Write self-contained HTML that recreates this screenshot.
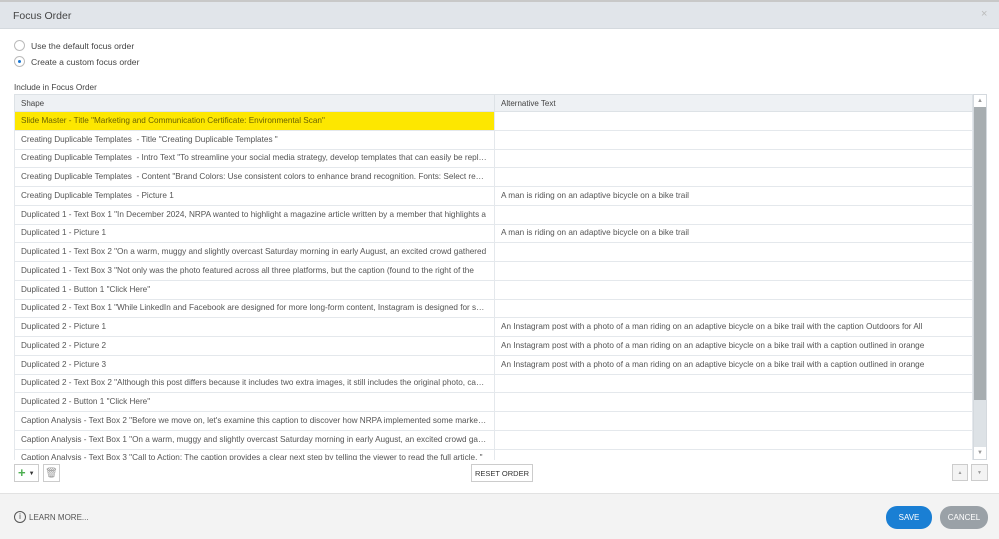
<!DOCTYPE html>
<html><head><style>
*{margin:0;padding:0;box-sizing:border-box}
body{width:999px;height:539px;background:#fff;font-family:"Liberation Sans",sans-serif;position:relative;overflow:hidden;color:#444}
.abs{position:absolute}
.title{left:0;top:0;width:999px;height:29px;background:#e1e5ea;border-bottom:1px solid #d4d9de;font-size:10.5px;color:#444;padding:8px 0 0 13px;border-top:2px solid #c8c8c8}
.radio{width:11px;height:11px;border:1px solid #bbb;border-radius:50%;background:#fff}
.lbl{font-size:8.6px;color:#444}
.wrap{position:absolute;left:14px;top:94px;width:959px;height:366px;overflow:hidden}
table{border-collapse:collapse;table-layout:fixed;width:959px;font-size:8.2px;color:#555}
td{height:18.75px;border:1px solid #e4e8ec;padding:0 6px;white-space:nowrap;overflow:hidden;text-overflow:ellipsis;line-height:12px}
th{height:17px;background:#eef1f4;border:1px solid #dde2e6;font-weight:normal;text-align:left;padding:0 6px;font-size:8px;color:#444}
.footer{left:0;top:493px;width:999px;height:46px;background:#f3f3f3;border-top:1px solid #e2e2e2}
.btn{border:1px solid #ccc;background:#fff;font-size:7.5px;color:#333;text-align:center}
</style></head><body>
<div class="abs title">Focus Order</div>
<div class="abs" style="left:981px;top:8px;font-size:11px;color:#bbb">×</div>
<div class="abs radio" style="left:14px;top:40px"></div>
<div class="abs lbl" style="left:31px;top:41px">Use the default focus order</div>
<div class="abs radio" style="left:14px;top:56px"><div style="width:3px;height:3px;background:#1976d2;border-radius:50%;margin:3px 0 0 3px"></div></div>
<div class="abs lbl" style="left:31px;top:57px">Create a custom focus order</div>
<div class="abs lbl" style="left:14px;top:83px;font-size:8.2px">Include in Focus Order</div>
<div class="wrap">
<div class="abs" style="left:-5px;top:17px;width:492px;height:19px;background:#fde700;border-radius:3px"></div>
<table style="position:relative">
<colgroup><col style="width:480px"><col></colgroup>
<tr><th>Shape</th><th>Alternative Text</th></tr>
<tr><td style="color:#6a6300">Slide Master - Title "Marketing and Communication Certificate: Environmental Scan"</td><td style="background:#fff"></td></tr>
<tr><td>Creating Duplicable Templates &nbsp;- Title "Creating Duplicable Templates "</td><td></td></tr>
<tr><td>Creating Duplicable Templates &nbsp;- Intro Text "To streamline your social media strategy, develop templates that can easily be replicated</td><td></td></tr>
<tr><td>Creating Duplicable Templates &nbsp;- Content "Brand Colors: Use consistent colors to enhance brand recognition. Fonts: Select readable</td><td></td></tr>
<tr><td>Creating Duplicable Templates &nbsp;- Picture 1</td><td>A man is riding on an adaptive bicycle on a bike trail</td></tr>
<tr><td>Duplicated 1 - Text Box 1 "In December 2024, NRPA wanted to highlight a magazine article written by a member that highlights a</td><td></td></tr>
<tr><td>Duplicated 1 - Picture 1</td><td>A man is riding on an adaptive bicycle on a bike trail</td></tr>
<tr><td>Duplicated 1 - Text Box 2 "On a warm, muggy and slightly overcast Saturday morning in early August, an excited crowd gathered</td><td></td></tr>
<tr><td>Duplicated 1 - Text Box 3 "Not only was the photo featured across all three platforms, but the caption (found to the right of the</td><td></td></tr>
<tr><td>Duplicated 1 - Button 1 "Click Here"</td><td></td></tr>
<tr><td>Duplicated 2 - Text Box 1 "While LinkedIn and Facebook are designed for more long-form content, Instagram is designed for short</td><td></td></tr>
<tr><td>Duplicated 2 - Picture 1</td><td>An Instagram post with a photo of a man riding on an adaptive bicycle on a bike trail with the caption Outdoors for All</td></tr>
<tr><td>Duplicated 2 - Picture 2</td><td>An Instagram post with a photo of a man riding on an adaptive bicycle on a bike trail with a caption outlined in orange</td></tr>
<tr><td>Duplicated 2 - Picture 3</td><td>An Instagram post with a photo of a man riding on an adaptive bicycle on a bike trail with a caption outlined in orange</td></tr>
<tr><td>Duplicated 2 - Text Box 2 "Although this post differs because it includes two extra images, it still includes the original photo, caption</td><td></td></tr>
<tr><td>Duplicated 2 - Button 1 "Click Here"</td><td></td></tr>
<tr><td>Caption Analysis - Text Box 2 "Before we move on, let's examine this caption to discover how NRPA implemented some marketing</td><td></td></tr>
<tr><td>Caption Analysis - Text Box 1 "On a warm, muggy and slightly overcast Saturday morning in early August, an excited crowd gathered</td><td></td></tr>
<tr><td>Caption Analysis - Text Box 3 "Call to Action: The caption provides a clear next step by telling the viewer to read the full article. "</td><td></td></tr>
</table>
</div>
<div class="abs" style="left:973px;top:94px;width:14px;height:366px;background:#dde2e6;border:1px solid #d4d9de"></div>
<div class="abs" style="left:974px;top:95px;width:12px;height:12px;background:#fff;font-size:6px;color:#999;text-align:center;line-height:12px">▲</div>
<div class="abs" style="left:974px;top:107px;width:12px;height:293px;background:#a7adb0"></div>
<div class="abs" style="left:974px;top:447px;width:12px;height:12px;background:#fff;font-size:6px;color:#999;text-align:center;line-height:12px">▼</div>
<div class="abs btn" style="left:14px;top:464px;width:25px;height:18px;text-align:left;padding-left:3px;font-size:13px;line-height:16px;color:#4caf50;font-weight:bold">+<span style="font-size:6px;color:#333;margin-left:3px;vertical-align:middle">▼</span></div>
<div class="abs btn" style="left:43px;top:464px;width:17px;height:18px;color:#999;font-size:10px;line-height:17px">🗑</div>
<div class="abs btn" style="left:471px;top:464px;width:62px;height:18px;line-height:17px">RESET ORDER</div>
<div class="abs btn" style="left:952px;top:464px;width:16px;height:17px;background:#f3f3f3;font-size:5px;color:#999;line-height:16px">▲</div>
<div class="abs btn" style="left:971px;top:464px;width:17px;height:17px;background:#f3f3f3;font-size:5px;color:#999;line-height:16px">▼</div>
<div class="abs footer"></div>
<div class="abs" style="left:14px;top:511px;width:12px;height:12px;border:1px solid #555;border-radius:50%;font-size:8px;text-align:center;line-height:10px;color:#444">i</div>
<div class="abs" style="left:29px;top:513px;font-size:8px;color:#555">LEARN MORE...</div>
<div class="abs" style="left:886px;top:506px;width:46px;height:23px;background:#1a7fd4;border-radius:11px;color:#fff;font-size:8px;text-align:center;line-height:23px">SAVE</div>
<div class="abs" style="left:940px;top:506px;width:48px;height:23px;background:#9aa1a7;border-radius:11px;color:#fff;font-size:8px;text-align:center;line-height:23px">CANCEL</div>
</body></html>
